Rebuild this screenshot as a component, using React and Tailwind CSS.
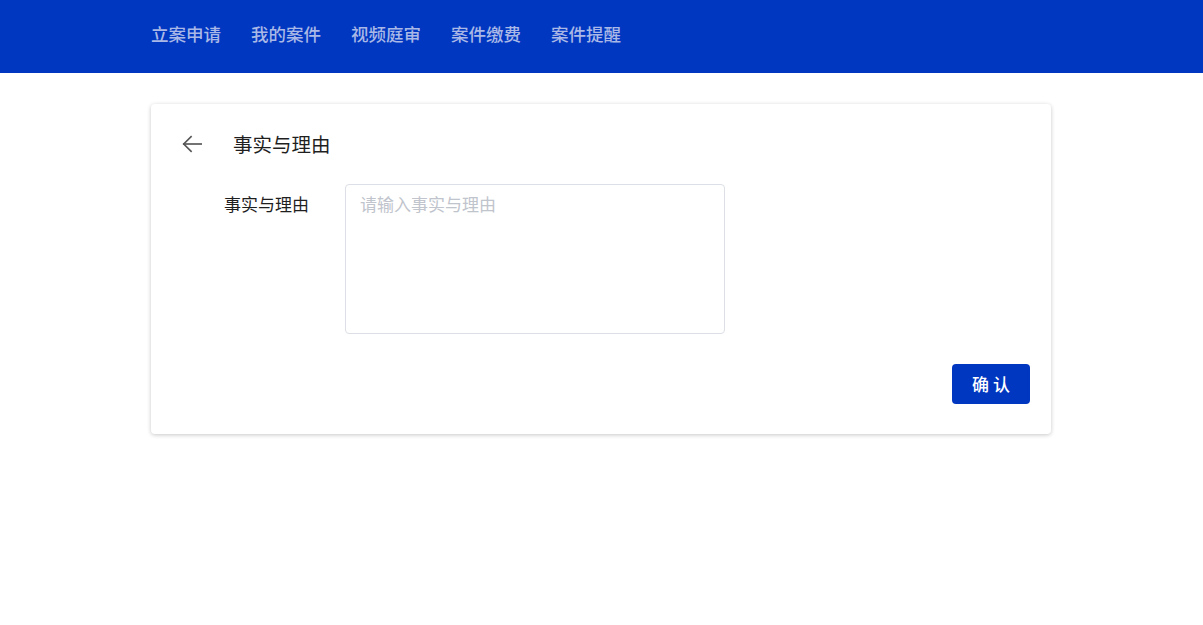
const navItems = ["立案申请", "我的案件", "视频庭审", "案件缴费", "案件提醒"];

function ArrowLeft() {
  return (
    <svg width="22" height="22" viewBox="0 0 24 24" fill="none" stroke="#555" strokeWidth="1.8" strokeLinecap="square">
      <path d="M22 12H3" />
      <path d="M11 4l-8 8 8 8" />
    </svg>
  );
}

export default function App() {
  return (
    <div
      className="min-h-screen bg-white"
      style={{ fontFamily: '"Noto Sans CJK SC", "Noto Sans", sans-serif' }}
    >
      <header className="h-[73px] bg-[#0037c1]">
        <nav className="ml-[151px] flex h-full items-center gap-[30px] pb-[6px]">
          {navItems.map((item) => (
            <a key={item} className="text-[17.5px] font-medium leading-none text-[#a9b8e6] cursor-pointer">
              {item}
            </a>
          ))}
        </nav>
      </header>

      <main className="pt-[31px]">
        <div className="ml-[151px] w-[900px] rounded bg-white px-[30px] pb-[30px] pr-[21px] pt-[30px] shadow-[0_1px_4px_rgba(0,0,0,0.22)]">
          <div className="flex h-[20px] items-center">
            <ArrowLeft />
            <h2 className="ml-[30px] text-[19.5px] leading-none text-[#1f1f1f]">事实与理由</h2>
          </div>

          <div className="mt-[30px] flex">
            <label className="w-[128px] pt-[9px] text-right text-[17px] leading-[22px] text-[#1f1f1f]">
              事实与理由
            </label>
            <textarea
              placeholder="请输入事实与理由"
              className="ml-[36px] h-[150px] w-[380px] resize-none rounded border border-[#dcdfe6] px-[14px] py-[7px] text-[17px] leading-[24px] text-[#333] outline-none placeholder:text-[#c0c4cc]"
            />
          </div>

          <div className="mt-[30px] flex justify-end">
            <button className="h-[40px] w-[78px] rounded bg-[#0037c1] text-[17px] font-medium text-white">
              确 认
            </button>
          </div>
        </div>
      </main>
    </div>
  );
}
